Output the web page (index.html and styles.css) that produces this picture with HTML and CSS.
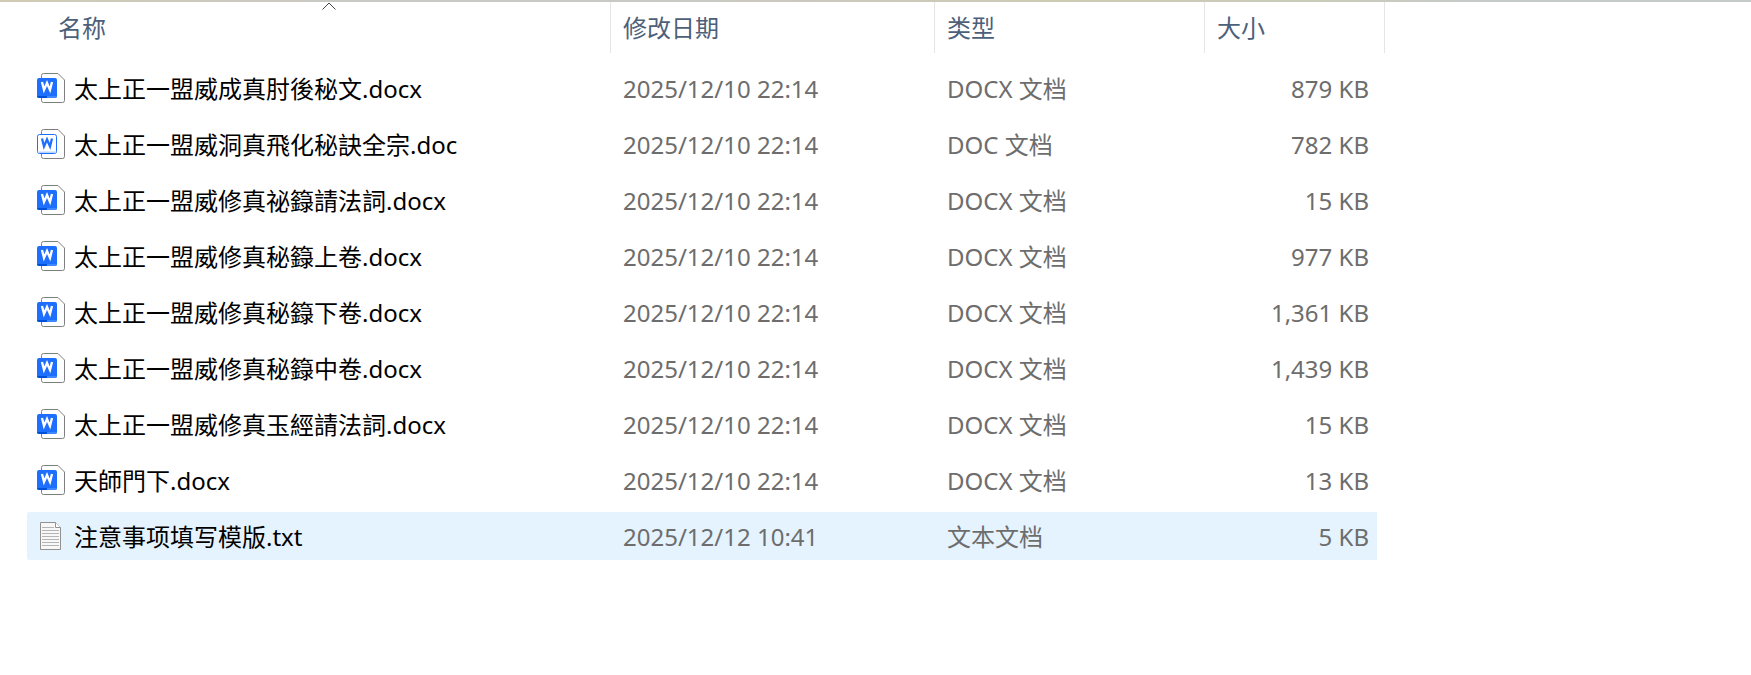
FILE: index.html
```html
<!DOCTYPE html>
<html lang="zh-CN">
<head>
    <meta charset="UTF-8">
    <title>文件列表</title>
    <link rel="stylesheet" href="styles.css">
</head>
<body>
    <!-- Shared icons -->
    <svg class="sprite" aria-hidden="true">
        <symbol id="icon-docx" viewBox="0 0 28 30">
            <path d="M4.5 5V2.5a2 2 0 0 1 2-2H21L27.5 7v20.5a2 2 0 0 1-2 2h-19a2 2 0 0 1-2-2V25" fill="#fff" stroke="#7f7f7f"/>
            <rect x="0" y="5" width="20" height="20" rx="2" fill="#1e6fff"/>
            <path d="M0 23h10v2H2a2 2 0 0 1-2-2z" fill="#0050dc"/>
            <path d="M10 23h10a2 2 0 0 1-2 2h-8z" fill="#3f87ff"/>
            <path d="M5 9l2 8 3-7 3 7 2-8" fill="none" stroke="#fff" stroke-width="2.3"/>
        </symbol>
        <symbol id="icon-doc" viewBox="0 0 28 30">
            <path d="M4.5 5V2.5a2 2 0 0 1 2-2H21L27.5 7v20.5a2 2 0 0 1-2 2h-19a2 2 0 0 1-2-2V25" fill="#fff" stroke="#7f7f7f"/>
            <rect x="0.5" y="5.5" width="19" height="19" rx="2" fill="#fff" stroke="#1e6fff"/>
            <path d="M1 22.500h18v1.500H1z" fill="#b8d3ff"/>
            <path d="M5 9.500l2 8 3-7 3 7 2-8" fill="none" stroke="#1e6fff" stroke-width="2.3"/>
        </symbol>
        <symbol id="icon-txt" viewBox="0 0 28 30">
            <path d="M3.5 1.5h15l5 5v22h-20z" fill="#f8f8f8" stroke="#919191"/>
            <path d="M18.5 1.5v5h5" fill="#fff" stroke="#919191"/>
            <path d="M5 6.5h12M5 9.5h17M5 12.5h17M5 15.5h17M5 18.5h17M5 21.5h17M5 24.5h17" stroke="#b4b4b4"/>
        </symbol>
    </svg>

    <main class="explorer">
        <table class="files">
            <colgroup>
                <col class="col-name">
                <col class="col-date">
                <col class="col-type">
                <col class="col-size">
            </colgroup>
            <thead>
                <tr>
                    <th class="name" aria-sort="ascending">
                        <button type="button">名称<svg class="sort" viewBox="0 0 14 8" aria-hidden="true"><path d="M0.5 7.5L7 1l6.5 6.5" fill="none" stroke="#444"/></svg></button>
                    </th>
                    <th><button type="button">修改日期</button></th>
                    <th><button type="button">类型</button></th>
                    <th><button type="button">大小</button></th>
                </tr>
            </thead>
            <tbody>
                <tr>
                    <td class="name"><div class="file"><svg class="icon"><use href="#icon-docx"/></svg><span>太上正一盟威成真肘後秘文.docx</span></div></td>
                    <td>2025/12/10 22:14</td>
                    <td>DOCX 文档</td>
                    <td class="size">879 KB</td>
                </tr>
                <tr>
                    <td class="name"><div class="file"><svg class="icon"><use href="#icon-doc"/></svg><span>太上正一盟威洞真飛化秘訣全宗.doc</span></div></td>
                    <td>2025/12/10 22:14</td>
                    <td>DOC 文档</td>
                    <td class="size">782 KB</td>
                </tr>
                <tr>
                    <td class="name"><div class="file"><svg class="icon"><use href="#icon-docx"/></svg><span>太上正一盟威修真祕籙請法詞.docx</span></div></td>
                    <td>2025/12/10 22:14</td>
                    <td>DOCX 文档</td>
                    <td class="size">15 KB</td>
                </tr>
                <tr>
                    <td class="name"><div class="file"><svg class="icon"><use href="#icon-docx"/></svg><span>太上正一盟威修真秘籙上卷.docx</span></div></td>
                    <td>2025/12/10 22:14</td>
                    <td>DOCX 文档</td>
                    <td class="size">977 KB</td>
                </tr>
                <tr>
                    <td class="name"><div class="file"><svg class="icon"><use href="#icon-docx"/></svg><span>太上正一盟威修真秘籙下卷.docx</span></div></td>
                    <td>2025/12/10 22:14</td>
                    <td>DOCX 文档</td>
                    <td class="size">1,361 KB</td>
                </tr>
                <tr>
                    <td class="name"><div class="file"><svg class="icon"><use href="#icon-docx"/></svg><span>太上正一盟威修真秘籙中卷.docx</span></div></td>
                    <td>2025/12/10 22:14</td>
                    <td>DOCX 文档</td>
                    <td class="size">1,439 KB</td>
                </tr>
                <tr>
                    <td class="name"><div class="file"><svg class="icon"><use href="#icon-docx"/></svg><span>太上正一盟威修真玉經請法詞.docx</span></div></td>
                    <td>2025/12/10 22:14</td>
                    <td>DOCX 文档</td>
                    <td class="size">15 KB</td>
                </tr>
                <tr>
                    <td class="name"><div class="file"><svg class="icon"><use href="#icon-docx"/></svg><span>天師門下.docx</span></div></td>
                    <td>2025/12/10 22:14</td>
                    <td>DOCX 文档</td>
                    <td class="size">13 KB</td>
                </tr>
                <tr class="active">
                    <td class="name"><div class="file"><svg class="icon"><use href="#icon-txt"/></svg><span>注意事项填写模版.txt</span></div></td>
                    <td>2025/12/12 10:41</td>
                    <td>文本文档</td>
                    <td class="size">5 KB</td>
                </tr>
            </tbody>
        </table>
    </main>
</body>
</html>
```

FILE: styles.css
```css
body {
    margin: 0;
    background-color: #fff;
    font-family: "Noto Sans", "Noto Sans CJK SC", sans-serif;
    font-size: 24px;
    line-height: 32px;
    color: #6d6d6d;
}
.sprite {
    display: none;
}
.explorer {
    padding: 2px 0 0 27px;
    background: linear-gradient(to right, #cfcbb4, #c9c8c4 20%, #c9c8c4 38%, #cdcab4 60%, #c9cbb8 75%, #c5caca 85%) top / 100% 2px no-repeat;
}
.files {
    width: 100%;
    max-width: 1358px;
    table-layout: fixed;
    border-collapse: separate;
    border-spacing: 0;
}
.col-date {
    width: 324px;
}
.col-type {
    width: 270px;
}
.col-size {
    width: 180px;
}

/* column headers */
th {
    padding: 0 0 7px;
    font-weight: normal;
}
th.name {
    padding-left: 19px;
}
th button {
    display: block;
    position: relative;
    width: 100%;
    height: 51px;
    padding: 0 12px;
    border: none;
    border-right: 1px solid #e5e5e5;
    background: none;
    font: inherit;
    color: #4c607a;
    text-align: left;
    cursor: pointer;
}
th button:hover {
    background-color: #e5f3ff;
}
.sort {
    position: absolute;
    top: 0;
    left: 50%;
    width: 14px;
    height: 8px;
    margin-left: -6px;
}

/* rows, the transparent borders leave a gap between them */
td {
    height: 46px;
    padding: 2px 12px 0;
    border: solid transparent;
    border-width: 4px 0;
    background-clip: padding-box;
    white-space: nowrap;
}
td.name {
    padding: 0 10px;
    color: #000;
    border-radius: 2px 0 0 2px / 6px 0 0 6px;
}
td.size {
    padding-right: 8px;
    border-right-width: 8px;
    text-align: right;
}
.active td {
    background-color: #e5f3ff;
}
.file {
    display: flex;
    align-items: center;
    gap: 9px;
}
.file span {
    padding-top: 2px;
}
.icon {
    flex: none;
    width: 28px;
    height: 30px;
}
```
